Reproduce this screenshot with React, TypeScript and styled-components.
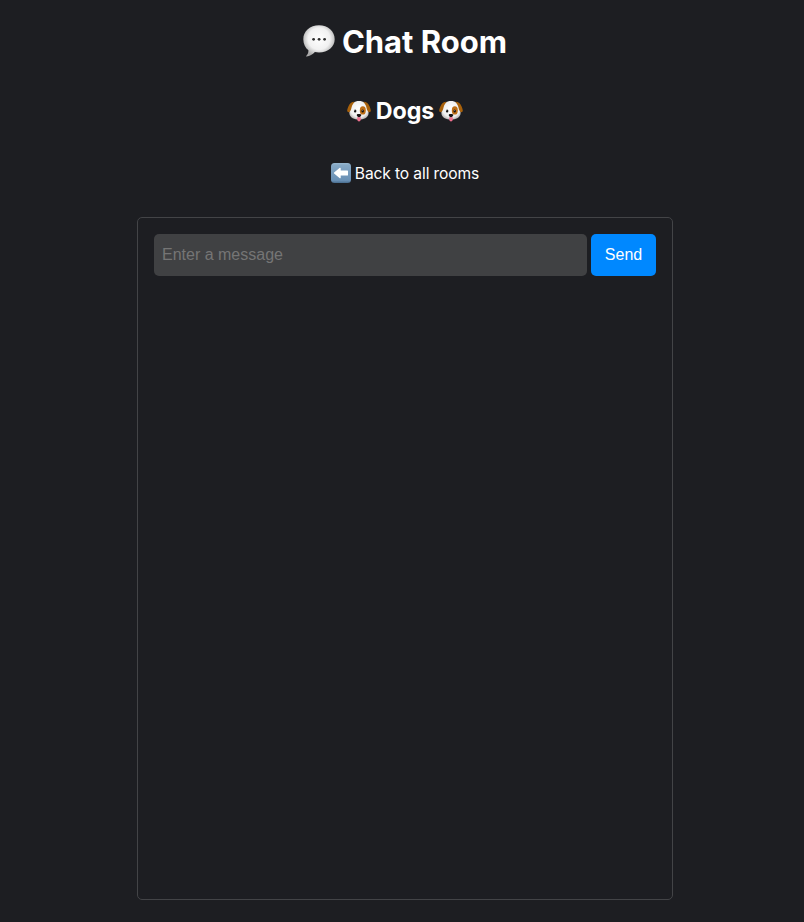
import React from "react";
import styled, { createGlobalStyle } from "styled-components";

const GlobalStyle = createGlobalStyle`
  * { box-sizing: border-box; }
  body {
    margin: 0;
    background: #1d1e22;
    color: #fff;
    font-family: Inter, "Liberation Sans", sans-serif;
    font-size: 16px;
  }
`;

const Page = styled.main`
  width: 536px;
  height: 922px;
  margin-left: 137px;
  display: flex;
  flex-direction: column;
  align-items: center;
`;

const Title = styled.h1`
  display: flex;
  align-items: center;
  gap: 7px;
  height: 38px;
  margin: 22px 0 0;
  font-size: 31px;
  font-weight: 700;
  line-height: 40px;
  white-space: nowrap;
`;

const TitleText = styled.span`
  padding-top: 2px;
`;

const RoomName = styled.h2`
  display: flex;
  align-items: center;
  gap: 5px;
  height: 30px;
  margin: 36px 0 0;
  font-size: 23.25px;
  font-weight: 700;
  letter-spacing: -0.1px;
  line-height: 30px;
`;

const BackLink = styled.a`
  display: flex;
  align-items: center;
  gap: 4px;
  height: 24px;
  margin-top: 35px;
  color: #fff;
  font-size: 15.6px;
  font-weight: 400;
  letter-spacing: -0.12px;
  line-height: 24px;
  text-decoration: none;
  white-space: nowrap;
`;

const BackText = styled.span`
  padding-top: 2px;
`;

const Icon = styled.svg<{ $size: number; $drop?: number }>`
  display: block;
  flex: none;
  width: ${(p) => p.$size}px;
  height: ${(p) => p.$size}px;
  margin-top: ${(p) => p.$drop ?? 0}px;
`;

const ChatPanel = styled.section`
  width: 536px;
  height: 683px;
  margin-top: 32px;
  padding: 16px;
  border: 1px solid #434447;
  border-radius: 5px;
`;

const MessageForm = styled.form`
  display: flex;
  gap: 4px;
  height: 42px;
`;

const MessageInput = styled.input`
  width: 433px;
  padding: 0 8px;
  border: 0;
  border-radius: 5px;
  outline: none;
  background: #404143;
  color: #fff;
  font: 16px "Liberation Sans", Arial, sans-serif;
  &::placeholder { color: #757575; opacity: 1; }
`;

const SendButton = styled.button`
  width: 65px;
  padding: 0;
  border: 0;
  border-radius: 5px;
  background: #0088ff;
  color: #fff;
  font: 16px "Liberation Sans", Arial, sans-serif;
`;

const SpeechBubble = () => (
  <Icon $size={32} viewBox="0 0 32 32" aria-hidden="true">
    <defs>
      <radialGradient id="bubble" cx=".5" cy=".43" r=".56">
        <stop offset="0" stopColor="#fff" />
        <stop offset=".62" stopColor="#f1f1f1" />
        <stop offset="1" stopColor="#aaa" />
      </radialGradient>
    </defs>
    <path d="M16 .3C25 .3 31.7 6.5 31.7 14.2S25 27.5 16 27.5c-1.500 0-2.800-.1-4.100-.4C9.600 29.600 6.700 31.100 3.700 31.600c-.6.1-.8-.5-.3-.9 1.500-1.500 2.100-3.400 2-5.500C2.200 22.700.3 18.900.3 14.200.3 6.500 7 .3 16 .3Z" fill="url(#bubble)" />
    <circle cx="10.600" cy="14.300" r="1.400" fill="#303030" />
    <circle cx="16.100" cy="14.300" r="1.400" fill="#303030" />
    <circle cx="21.600" cy="14.300" r="1.400" fill="#303030" />
  </Icon>
);

const Dog = ({ id }: { id: string }) => (
  <Icon $size={24} $drop={2} viewBox="0 0 24 24" aria-hidden="true">
    <defs>
      <radialGradient id={id} cx=".5" cy=".42" r=".62">
        <stop offset="0" stopColor="#fff" />
        <stop offset=".72" stopColor="#eee" />
        <stop offset="1" stopColor="#b3adab" />
      </radialGradient>
    </defs>
    <path d="M12 1C7.500 1 4.600 3.300 3.600 7.800 2.500 10 2.100 12.500 2.600 14.500c.7 3 4.500 5 9.400 5s8.700-2 9.400-5c.5-2 .1-4.500-1-6.700C19.400 3.300 16.500 1 12 1Z" fill={`url(#${id})`} />
    <path d="M7.800 1.700C4.500 1.600 2.500 3.500 1.500 6.200.8 8.100.1 9.600.2 10.800c.1 1.400 1.500 1.700 2.500.9 1.500-1.200 1.500-3.400 2.200-5.400.6-1.700 1.500-3.100 2.900-4.600Z" fill="#a8610b" />
    <path d="M16.200 1.700c3.300-.1 5.300 1.800 6.300 4.500.7 1.900 1.400 3.400 1.300 4.600-.1 1.400-1.500 1.700-2.500.9-1.500-1.200-1.500-3.400-2.200-5.400-.6-1.700-1.500-3.100-2.900-4.600Z" fill="#a8610b" />
    <ellipse cx="15.800" cy="10.400" rx="3" ry="4.200" fill="#bd6e16" />
    <ellipse cx="8.100" cy="11" rx="1.250" ry="1.600" fill="#171515" />
    <ellipse cx="15.700" cy="11" rx="1.250" ry="1.600" fill="#171515" />
    <circle cx="7.800" cy="10.300" r=".4" fill="#fff" />
    <circle cx="15.400" cy="10.300" r=".4" fill="#fff" />
    <path d="M10.200 17.300h3.600v2.300c0 2.400-3.600 2.400-3.600 0Z" fill="#f0708f" />
    <path d="M9.800 14.700c.5-.8 3.900-.8 4.400 0 .4.700-1 2.600-2.200 2.600s-2.600-1.900-2.200-2.600Z" fill="#171313" />
  </Icon>
);

const BackArrow = () => (
  <Icon $size={20} viewBox="0 0 20 20" aria-hidden="true">
    <defs>
      <linearGradient id="back" x1="0" y1="0" x2="0" y2="1">
        <stop offset="0" stopColor="#98b8d0" />
        <stop offset=".12" stopColor="#85a8c5" />
        <stop offset=".88" stopColor="#688fb4" />
        <stop offset="1" stopColor="#486c8d" />
      </linearGradient>
    </defs>
    <rect width="20" height="20" rx="3.500" fill="url(#back)" />
    <path d="M3.100 9.500 8.800 4.800c.4-.3.900 0 .9.500v2.200h6.700c.4 0 .6.200.6.600v3.800c0 .4-.2.600-.6.600H9.700v2.200c0 .5-.5.800-.9.500l-5.700-4.700c-.3-.300-.3-.700 0-1Z" fill="#fff" />
  </Icon>
);

export default function App() {
  return (
    <>
      <GlobalStyle />
      <Page>
        <Title><SpeechBubble /><TitleText>Chat Room</TitleText></Title>
        <RoomName><Dog id="dog-left" />Dogs<Dog id="dog-right" /></RoomName>
        <BackLink href="#"><BackArrow /><BackText>Back to all rooms</BackText></BackLink>
        <ChatPanel>
          <MessageForm onSubmit={(event) => event.preventDefault()}>
            <MessageInput placeholder="Enter a message" aria-label="Message" />
            <SendButton type="submit">Send</SendButton>
          </MessageForm>
        </ChatPanel>
      </Page>
    </>
  );
}
